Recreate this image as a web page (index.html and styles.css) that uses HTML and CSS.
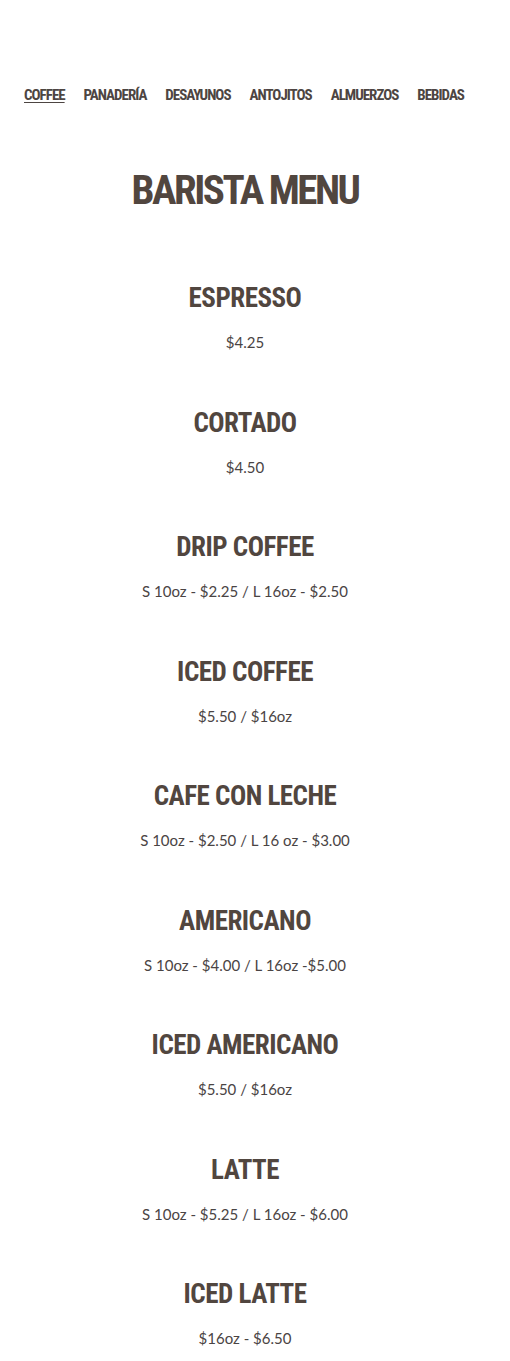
FILE: index.html
```html
<!DOCTYPE html>
<html lang="es">
<head>
<meta charset="utf-8">
<title>Barista Menu</title>
<link rel="stylesheet" href="styles.css">
</head>
<body>
<div class="page">
  <nav class="tabs">
    <a class="tab active" href="#">COFFEE</a>
    <a class="tab" href="#">PANADERÍA</a>
    <a class="tab" href="#">DESAYUNOS</a>
    <a class="tab" href="#">ANTOJITOS</a>
    <a class="tab" href="#">ALMUERZOS</a>
    <a class="tab" href="#">BEBIDAS</a>
  </nav>
  <h1 class="title">BARISTA MENU</h1>
  <ul class="menu">
    <li class="item"><h2 class="name">ESPRESSO</h2><p class="price">$4.25</p></li>
    <li class="item"><h2 class="name">CORTADO</h2><p class="price">$4.50</p></li>
    <li class="item"><h2 class="name">DRIP COFFEE</h2><p class="price">S 10oz - $2.25 / L 16oz - $2.50</p></li>
    <li class="item"><h2 class="name">ICED COFFEE</h2><p class="price">$5.50 / $16oz</p></li>
    <li class="item"><h2 class="name">CAFE CON LECHE</h2><p class="price">S 10oz - $2.50 / L 16 oz - $3.00</p></li>
    <li class="item"><h2 class="name">AMERICANO</h2><p class="price">S 10oz - $4.00 / L 16oz -$5.00</p></li>
    <li class="item"><h2 class="name">ICED AMERICANO</h2><p class="price">$5.50 / $16oz</p></li>
    <li class="item"><h2 class="name">LATTE</h2><p class="price">S 10oz - $5.25 / L 16oz - $6.00</p></li>
    <li class="item"><h2 class="name">ICED LATTE</h2><p class="price">$16oz - $6.50</p></li>
  </ul>
</div>
</body>
</html>
```
FILE: styles.css
```css
html, body {
  margin: 0;
  padding: 0;
  background: #ffffff;
}
.page {
  width: 442px;
  margin-left: 24px;
  padding-top: 85px;
}
.tabs {
  display: flex;
  gap: 19px;
}
.tab {
  font-family: "Roboto Condensed", "DejaVu Sans Condensed", sans-serif;
  font-weight: 700;
  font-size: 15px;
  line-height: 20px;
  letter-spacing: -1px;
  color: #4d4542;
  text-decoration: none;
}
.tab.active {
  text-decoration: underline;
  text-decoration-thickness: 1px;
  text-underline-offset: 2px;
}
.title {
  margin: 59px 0 0;
  text-align: center;
  font-family: "Roboto Condensed", "DejaVu Sans Condensed", sans-serif;
  font-weight: 700;
  font-size: 41px;
  line-height: 52px;
  letter-spacing: -2.5px;
  color: #51463f;
}
.menu {
  list-style: none;
  margin: 64px 0 0;
  padding: 0;
  display: flex;
  flex-direction: column;
  gap: 44.5px;
}
.item {
  text-align: center;
}
.name {
  margin: 0;
  font-family: "Roboto Condensed", "DejaVu Sans Condensed", sans-serif;
  font-weight: 700;
  font-size: 27px;
  line-height: 36px;
  letter-spacing: -0.5px;
  color: #51463f;
}
.price {
  margin: 8px 0 0;
  font-family: "Lato", "Open Sans", sans-serif;
  font-size: 15px;
  line-height: 36px;
  color: #4a4444;
}
```
